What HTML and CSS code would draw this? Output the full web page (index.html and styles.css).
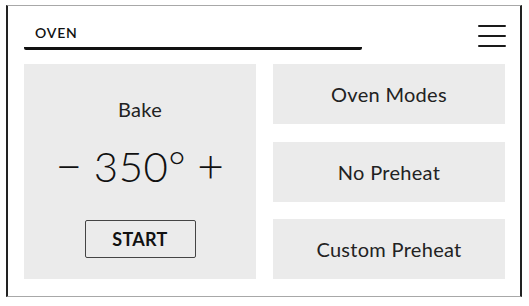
FILE: index.html
```html
<!DOCTYPE html>
<html>
<head>
<meta charset="utf-8">
<link rel="stylesheet" href="styles.css">
</head>
<body>
<div class="frame">
  <header class="top">
    <div class="title">OVEN</div>
    <button class="menu" aria-label="Menu">
      <svg width="28" height="26" viewBox="0 0 28 26">
        <path d="M1 4H27M1 14H27M1 24H27" stroke="#1a1a1a" stroke-width="2" stroke-linecap="round" fill="none"/>
      </svg>
    </button>
  </header>
  <main class="grid">
    <section class="bake">
      <div class="mode">Bake</div>
      <div class="temp"><span class="adj">−</span><span class="value">350°</span><span class="adj">+</span></div>
      <button class="start">START</button>
    </section>
    <div class="options">
      <button class="option">Oven Modes</button>
      <button class="option">No Preheat</button>
      <button class="option">Custom Preheat</button>
    </div>
  </main>
</div>
</body>
</html>
```
FILE: styles.css
```css
html, body {
  margin: 0;
  padding: 0;
  background: #fff;
}
body {
  padding: 5px 0 0 6px;
  font-family: Lato, "Open Sans", sans-serif;
  color: #222;
}
.frame {
  box-sizing: border-box;
  width: 516px;
  height: 292px;
  border-top: 1px solid #a8a8a8;
  border-bottom: 1px solid #a8a8a8;
  border-left: 2px solid #222;
  border-right: 2px solid #222;
  padding: 0 15px 15px 16px;
  display: flex;
  flex-direction: column;
}
.top {
  display: flex;
  justify-content: space-between;
  align-items: flex-start;
  height: 58px;
}
.title {
  width: 327px;
  margin-top: 17px;
  padding: 0 0 4px 11px;
  border-bottom: 3px solid #111;
  border-radius: 0 0 2px 2px;
  font-size: 14px;
  font-weight: 600;
  line-height: 20px;
  letter-spacing: 0.8px;
  color: #111;
}
.menu {
  margin-top: 16px;
  margin-right: -1px;
  padding: 0;
  border: 0;
  background: none;
  display: block;
}
.menu svg { display: block; }
.grid {
  display: grid;
  grid-template-columns: 232px 232px;
  column-gap: 17px;
  height: 215px;
}
.bake {
  background: #ebebeb;
  display: flex;
  flex-direction: column;
  align-items: center;
}
.mode {
  margin-top: 33px;
  font-size: 20px;
  line-height: 24px;
  letter-spacing: 0.3px;
}
.temp {
  margin-top: 23px;
  display: flex;
  align-items: center;
  gap: 11px;
  font-size: 42px;
  line-height: 44px;
  font-weight: 300;
  letter-spacing: 0.5px;
  color: #111;
}
.adj {
  font-size: 46px;
  font-weight: 300;
  margin-top: -3px;
}
.start {
  margin-top: 32px;
  width: 111px;
  height: 38px;
  border: 1px solid #444;
  border-radius: 2px;
  background: transparent;
  font-family: inherit;
  font-size: 18px;
  font-weight: 700;
  letter-spacing: 0.3px;
  color: #111;
  padding: 0;
}
.options {
  display: flex;
  flex-direction: column;
  justify-content: space-between;
}
.option {
  height: 60px;
  border: 0;
  background: #ebebeb;
  font-family: inherit;
  font-size: 20px;
  letter-spacing: 0.3px;
  color: #222;
  padding: 0;
}
```
